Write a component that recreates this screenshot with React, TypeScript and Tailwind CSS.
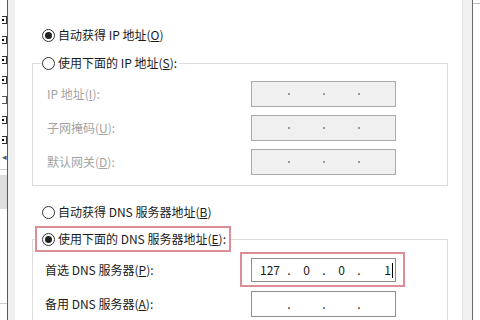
import type { ReactNode } from 'react'

const font = { fontFamily: '"Noto Sans CJK SC", "Noto Sans", sans-serif' }

const Radio = ({ checked }: { checked?: boolean }) => (
  <span className="w-[13px] h-[13px] rounded-full border border-[#333] bg-white flex items-center justify-center shrink-0">
    {checked && <span className="w-[7px] h-[7px] rounded-full bg-[#222]" />}
  </span>
)

const RadioRow = ({ checked, children }: { checked?: boolean; children: ReactNode }) => (
  <div className="flex items-center gap-[3px] h-[16px] text-[12px] leading-[16px] text-[#1a1a1a] whitespace-nowrap">
    <Radio checked={checked} />
    <span>{children}</span>
  </div>
)

const IpBox = ({ disabled, parts }: { disabled?: boolean; parts?: string[] }) => {
  const p = parts ?? ['', '', '', '']
  const dot = disabled ? (
    <span className="w-[2px] flex items-center justify-center">
      <span className="w-[2px] h-[2px] bg-[#9a9a9a]" />
    </span>
  ) : (
    <span className="w-[2px] flex justify-center text-[12px] text-[#1a1a1a]">.</span>
  )
  return (
    <div
      className={
        'w-[145px] h-full flex items-center border text-[12px] ' +
        (disabled ? 'bg-[#f0f0f0] border-[#a9a9a9]' : 'bg-white border-[#8e8e8e] text-[#1a1a1a]')
      }
    >
      <span className="w-[36px] text-center">{p[0]}</span>
      {dot}
      <span className="w-[33px] text-center">{p[1]}</span>
      {dot}
      <span className="w-[33px] text-center">{p[2]}</span>
      {dot}
      <span className="flex-1 flex justify-end items-center pr-[2px]">
        {p[3]}
        {p[3] && <span className="w-px h-[15px] bg-black ml-[1px]" />}
      </span>
    </div>
  )
}

const BgCheck = () => (
  <div className="h-[20px] flex items-center">
    <span className="w-[5px] h-[8px] border border-l-0 border-[#333] bg-white flex items-center">
      <span className="w-[2px] h-[2px] bg-black" />
    </span>
  </div>
)

export default function App() {
  return (
    <div className="w-[480px] h-[320px] flex overflow-hidden bg-white" style={font}>
      {/* window behind, left edge */}
      <div className="w-[7px] flex flex-col bg-white">
        <div className="pt-[10px] flex flex-col pl-[2px]">
          <BgCheck />
          <BgCheck />
          <BgCheck />
          <BgCheck />
          <div className="h-[20px] flex items-center">
            <span className="w-[5px] h-[8px] border border-l-0 border-[#555]" />
          </div>
          <BgCheck />
          <BgCheck />
        </div>
        <div className="h-[14px] flex items-center pl-[2px] text-[9px] text-[#555]">◂</div>
        <div className="h-[6px] border-b border-[#cfcfcf]" />
        <div className="mt-[5px] h-[34px] bg-[#dedede]" />
        <div className="h-[95px] border-b border-[#cfcfcf]" />
      </div>
      <div className="w-px bg-[#5a5a5a]" />
      <div className="w-[7px] bg-[#f0f0f0]" />

      {/* dialog body */}
      <div className="w-[447px] flex flex-col pl-[17px] pr-[14px] pt-[27px]">
        <div className="pl-[10px]">
          <RadioRow checked>
            自动获得 IP 地址(<u>O</u>)
          </RadioRow>
        </div>

        <fieldset className="mt-[12px] border border-[#dcdcdc] pl-[9px] pr-0 pt-[10px] pb-[10px]">
          <legend className="pl-0 pr-[2px]">
            <RadioRow>
              使用下面的 IP 地址(<u>S</u>):
            </RadioRow>
          </legend>
          <div className="flex flex-col gap-[8px] text-[12px] text-[#a3a3a3]">
            <div className="flex items-center h-[26px]">
              <span className="w-[209px] pl-[5px]">
                IP 地址(<u>I</u>):
              </span>
              <IpBox disabled />
            </div>
            <div className="flex items-center h-[26px]">
              <span className="w-[209px] pl-[5px]">
                子网掩码(<u>U</u>):
              </span>
              <IpBox disabled />
            </div>
            <div className="flex items-center h-[26px]">
              <span className="w-[209px] pl-[5px]">
                默认网关(<u>D</u>):
              </span>
              <IpBox disabled />
            </div>
          </div>
        </fieldset>

        <div className="pl-[10px] mt-[18px]">
          <RadioRow>
            自动获得 DNS 服务器地址(<u>B</u>)
          </RadioRow>
        </div>

        <fieldset className="mt-[6px] border border-[#dcdcdc] pl-[2px] pr-0 pt-0 pb-[10px]">
          <legend className="p-0">
            <div className="h-[26px] flex items-center border-2 border-[#dc8e96] pl-[5px] pr-[3px]">
              <RadioRow checked>
                使用下面的 DNS 服务器地址(<u>E</u>):
              </RadioRow>
            </div>
          </legend>
          <div className="flex flex-col text-[12px] text-[#1a1a1a]">
            <div className="flex items-center">
              <span className="w-[205px] pl-[10px]">
                首选 DNS 服务器(<u>P</u>):
              </span>
              <div className="h-[35px] border-2 border-[#dc8e96] pl-[9px] pr-[7px] pt-[4px] pb-[3px]">
                <IpBox parts={['127', '0', '0', '1']} />
              </div>
            </div>
            <div className="flex items-center h-[26px] mt-[4px]">
              <span className="w-[216px] pl-[10px]">
                备用 DNS 服务器(<u>A</u>):
              </span>
              <IpBox />
            </div>
          </div>
        </fieldset>
      </div>

      {/* right edge: scrollbar strip and next window */}
      <div className="w-[10px] bg-[#f0f0f0] border-l border-[#e2e2e2]" />
      <div className="w-px bg-[#6a6a6a]" />
      <div className="flex-1 flex flex-col">
        <div className="h-[4px] border-b border-[#bdbdbd]" />
      </div>
    </div>
  )
}
